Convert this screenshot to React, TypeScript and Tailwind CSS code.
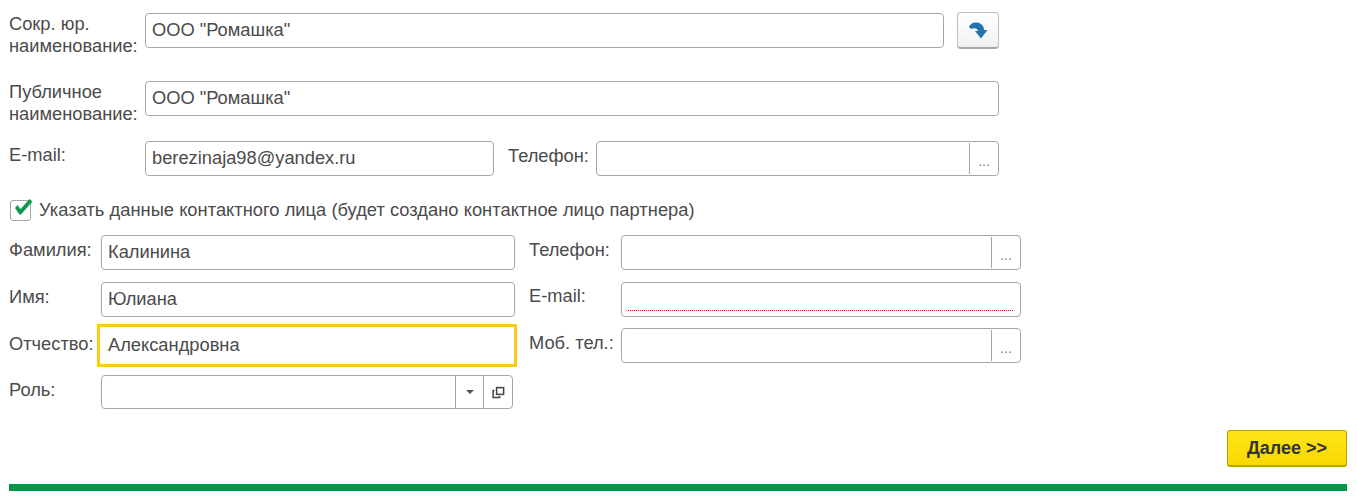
import type { ReactNode } from 'react'

const textColor = 'text-[#4b4b4b]'

function Label({ children, className = '' }: { children: ReactNode; className?: string }) {
  return <div className={`text-[18.3px] leading-[22px] ${textColor} ${className}`}>{children}</div>
}

function Field({ value, className = '', error, pick }: { value?: string; className?: string; error?: boolean; pick?: boolean }) {
  return (
    <div className={`relative flex h-[35px] items-stretch rounded-[4px] border border-[#a6a6a6] bg-white ${className}`}>
      <div className="flex flex-1 items-center pb-[2px] pl-[6px] text-[18.3px] text-[#4b4b4b]">{value}</div>
      {pick && (
        <div className="my-[1px] flex w-[29px] items-end justify-center border-l border-[#a6a6a6] pb-[7px] text-[14px] leading-[12px] text-[#7a7a7a]">
          ...
        </div>
      )}
      {error && (
        <div className="absolute bottom-[5px] left-[6px] right-[6px] h-[1px] bg-[repeating-linear-gradient(90deg,#ff0000_0,#ff0000_1px,transparent_1px,transparent_2px)]" />
      )}
    </div>
  )
}

function CheckMark() {
  return (
    <svg width="20" height="20" viewBox="0 0 20 20" className="absolute left-[2px] top-[-3px]">
      <path d="M2 10 L4.5 7 L7.5 11 L16.5 1 L19.5 3.5 L8 16.5 L6.5 16.5 Z" fill="#0e9a50" />
    </svg>
  )
}

function ArrowIcon() {
  return (
    <svg width="20" height="18" viewBox="0 0 20 18">
      <path d="M1 6 C3 2 6 1.5 8 1.5 C12 1.5 16 4 16 9 L19.5 9 L13 17.5 L7 10 L10 10 C10 8 7 6 3 8 Z" fill="#2473ad" />
    </svg>
  )
}

function OpenIcon() {
  return (
    <svg width="13" height="13" viewBox="0 0 13 13" fill="none" stroke="#444" strokeWidth="1.5">
      <rect x="4.6" y="1.6" width="7" height="6.8" />
      <path d="M2.5 4.6 H1.1 V11.4 H7.6 V10" />
    </svg>
  )
}

export default function App() {
  return (
    <div className="flex h-[499px] w-[1357px] flex-col overflow-hidden bg-white pl-[9px] pr-[10px] pt-[12px] font-['Liberation_Sans',Arial,sans-serif]">
      <div className="flex h-[36px] items-start">
        <Label className="w-[136px] pt-[1px]">Сокр. юр.<br />наименование:</Label>
        <Field value={'ООО "Ромашка"'} className="mt-[1px] w-[799px]" />
        <button className="ml-[13px] flex h-[37px] w-[42px] items-center justify-center rounded-[4px] border border-[#bdbdbd] border-b-[2px] border-b-[#a8a8a8] bg-gradient-to-b from-white to-[#f1f1f1]">
          <ArrowIcon />
        </button>
      </div>

      <div className="mt-[33px] flex h-[35px] items-start">
        <Label className="w-[136px]">Публичное<br />наименование:</Label>
        <Field value={'ООО "Ромашка"'} className="w-[854px]" />
      </div>

      <div className="mt-[25px] flex items-start">
        <Label className="w-[136px] pt-[3px]">E-mail:</Label>
        <Field value="berezinaja98@yandex.ru" className="w-[349px]" />
        <Label className="ml-[14px] w-[88px] pt-[4px]">Телефон:</Label>
        <Field className="w-[403px]" pick />
      </div>

      <div className="mt-[23px] flex h-[22px] items-center">
        <div className="relative mr-[8px] ml-[1px] h-[21px] w-[21px] rounded-[3px] border border-[#a6a6a6]">
          <CheckMark />
        </div>
        <Label className="pb-[1px] tracking-[0.03px]">Указать данные контактного лица (будет создано контактное лицо партнера)</Label>
      </div>

      <div className="mt-[14px] flex">
        <div className="flex w-[520px] flex-col">
          <div className="flex">
            <Label className="w-[92px] pt-[4px]">Фамилия:</Label>
            <Field value="Калинина" className="w-[414px]" />
          </div>
          <div className="mt-[12px] flex">
            <Label className="w-[92px] pt-[4px]">Имя:</Label>
            <Field value="Юлиана" className="w-[414px]" />
          </div>
          <div className="mt-[7px] flex">
            <Label className="w-[88px] pt-[9px]">Отчество:</Label>
            <div className="flex h-[43px] w-[420px] items-center border-[3px] border-[#fdcb17] pb-[2px] pl-[8px] text-[18.3px] text-[#4b4b4b]">
              Александровна
            </div>
          </div>
          <div className="mt-[8px] flex">
            <Label className="w-[92px] pt-[4px]">Роль:</Label>
            <div className="flex h-[34px] w-[412px] items-stretch rounded-[4px] border border-[#a6a6a6] bg-white">
              <div className="flex-1" />
              <div className="flex w-[28px] items-center justify-center border-l border-[#a6a6a6]">
                <div className="h-0 w-0 border-x-[4px] border-t-[4px] border-x-transparent border-t-[#555]" />
              </div>
              <div className="flex w-[29px] items-center justify-center border-l border-[#a6a6a6]">
                <OpenIcon />
              </div>
            </div>
          </div>
        </div>
        <div className="flex flex-col">
          <div className="flex">
            <Label className="w-[92px] pt-[4px]">Телефон:</Label>
            <Field className="w-[400px]" pick />
          </div>
          <div className="mt-[12px] flex">
            <Label className="w-[92px] pt-[3px]">E-mail:</Label>
            <Field className="w-[400px]" error />
          </div>
          <div className="mt-[11px] flex">
            <Label className="w-[92px] pt-[4px]">Моб. тел.:</Label>
            <Field className="w-[400px]" pick />
          </div>
        </div>
      </div>

      <div className="mt-[21px] flex justify-end">
        <button className="h-[37px] w-[120px] rounded-[3px] border border-[#b8a200] border-b-[2px] bg-gradient-to-b from-[#ffe516] to-[#f8d800] text-[18px] font-bold text-[#333]">
          Далее &gt;&gt;
        </button>
      </div>

      <div className="mt-[17px] h-[7px] bg-[#009646]" />
    </div>
  )
}
